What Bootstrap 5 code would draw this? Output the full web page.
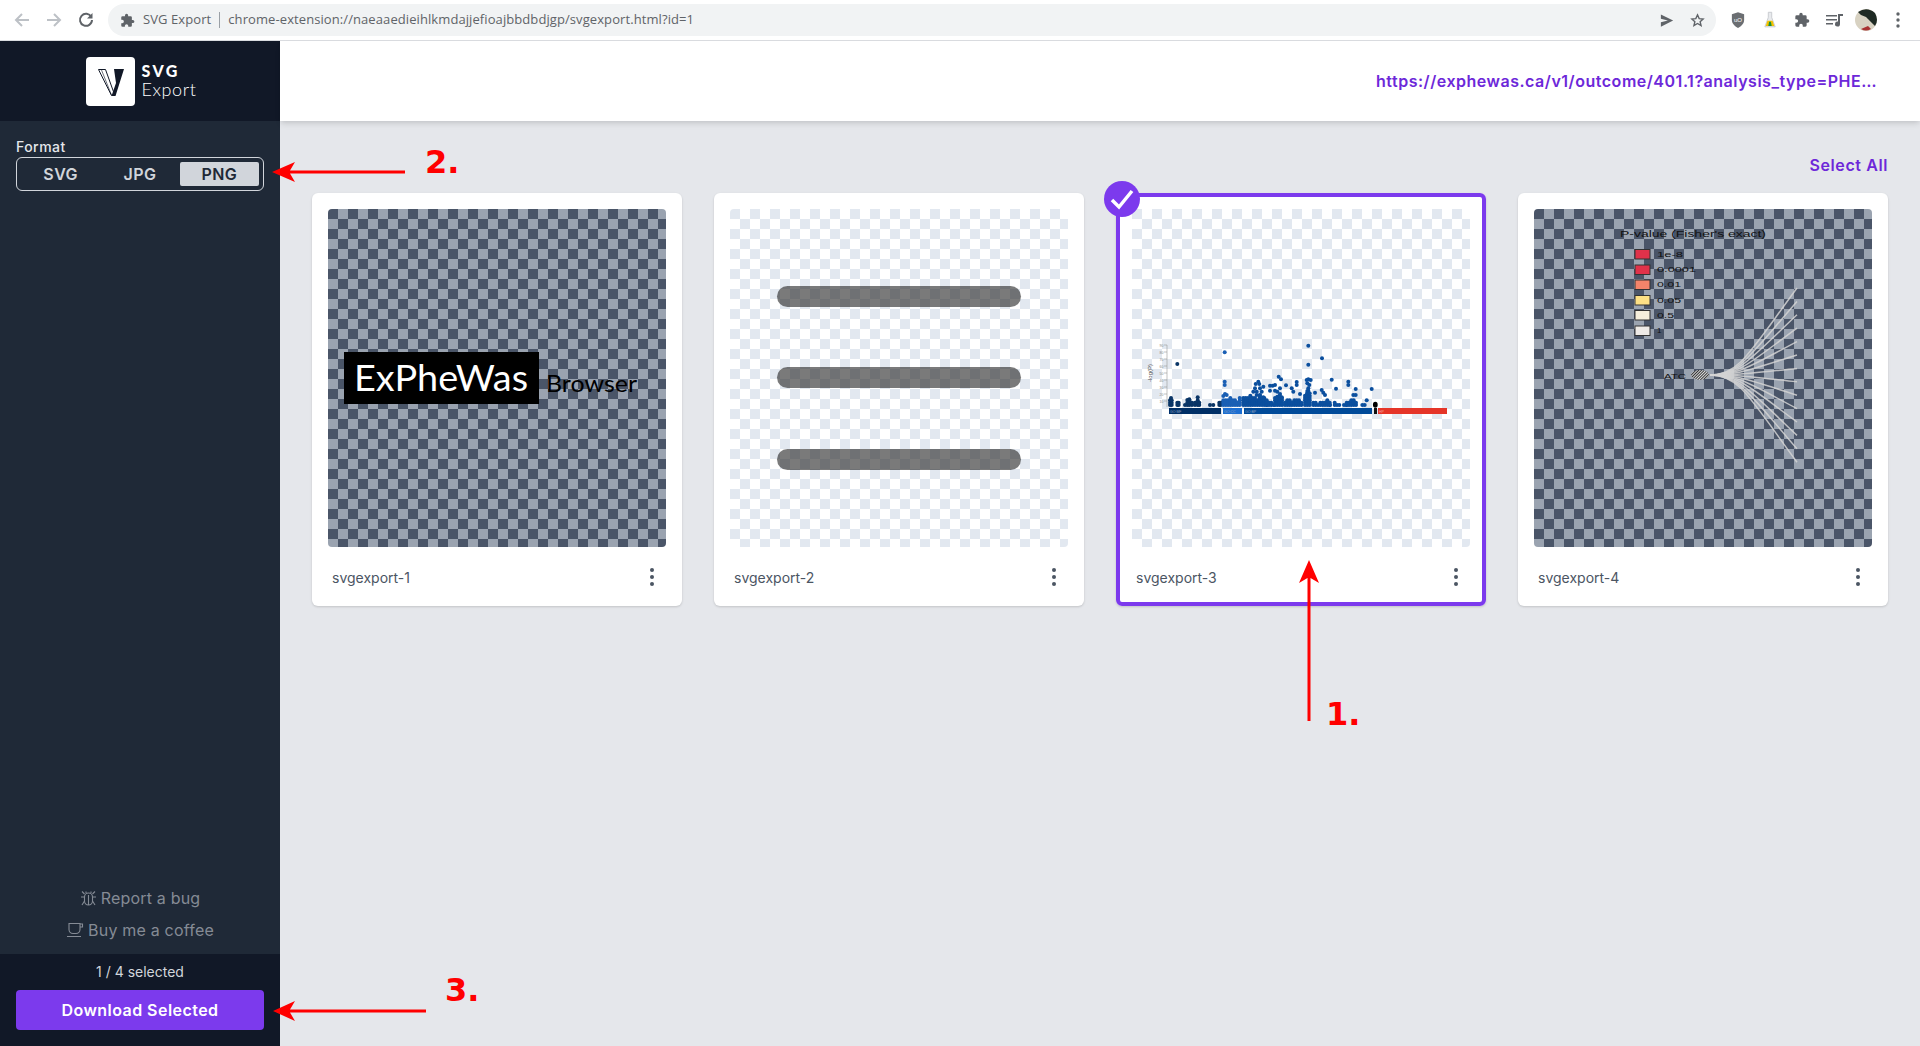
<!DOCTYPE html>
<html lang="en">
<head>
    <meta charset="UTF-8">
    <title>SVG Export</title>
    <link href="https://cdn.jsdelivr.net/npm/bootstrap@5.3.3/dist/css/bootstrap.min.css" rel="stylesheet">
    <style>
        html, body { height: 100%; overflow: hidden; }
        body { font-family: Inter, "Liberation Sans", sans-serif; background: #e5e7eb; }

        /* browser toolbar */
        .chrome-bar { height: 41px; background: #fff; border-bottom: 1px solid #dadce0; padding-left: 6px; }
        .chrome-btn { width: 32px; flex: none; }
        .omnibox { height: 32px; width: 1608px; margin: 0 6px; border-radius: 16px; background: #f1f3f4; padding: 0 11px 0 12px; font-family: "Open Sans", sans-serif; font-size: 13px; letter-spacing: .085px; color: #5f6368; }
        .omni-sep { width: 1px; height: 16px; background: #9aa0a6; margin: 0 8px; }

        /* sidebar */
        .page-body { min-height: 0; }
        .side-panel { width: 280px; flex: none; background: #1f2937; }
        .side-head { height: 80px; background: #111827; padding-left: 2px; }
        .logo-box { width: 49px; height: 49px; background: #fff; border-radius: 4px; }
        .logo-text { color: #fff; font-family: Lato, sans-serif; margin-left: 7px; }
        .logo-text b { display: block; font-weight: 900; font-size: 16px; line-height: 16px; letter-spacing: 2.4px; }
        .logo-text span { display: block; font-weight: 300; font-size: 18px; line-height: 20px; letter-spacing: .6px; }
        .format-wrap { padding: 17px 16px 0; }
        .format-label { color: #e5e7eb; font-size: 14px; font-weight: 500; line-height: 18px; margin-bottom: 1px; letter-spacing: .45px; }
        .format-group { height: 34px; border: 1px solid #d1d5db; border-radius: 6px; padding: 4px; }
        .format-group .btn { flex: 1 1 0; border: 0; border-radius: 2px; padding: 0; font-size: 16px; font-weight: 600; line-height: 24px; letter-spacing: .4px; color: #d1d5db; }
        .format-group .btn.picked { background: #d1d5db; color: #1f2937; }
        .side-links { padding-bottom: 8px; font-size: 16px; letter-spacing: .2px; }
        .side-link { height: 32px; color: #858b95; text-decoration: none; }
        .side-foot { height: 92px; background: #111827; padding: 8px 16px 0; }
        .sel-count { color: #d1d5db; font-size: 14px; line-height: 20px; margin-bottom: 8px; }
        .dl-btn { height: 40px; background: #7c3aed; border: 0; border-radius: 4px; color: #fff; font-weight: 600; font-size: 16px; letter-spacing: .45px; padding: 0; }

        /* main */
        .top-strip { height: 80px; background: #fff; box-shadow: 0 4px 6px -1px rgba(0,0,0,.1), 0 2px 4px -1px rgba(0,0,0,.06); padding-right: 43px; }
        .source-url { color: #6d28d9; font-weight: 600; font-size: 16px; letter-spacing: .52px; white-space: nowrap; }
        .select-all { color: #6d28d9; font-weight: 600; font-size: 16px; letter-spacing: .6px; text-decoration: none; line-height: 24px; }
        .tool-row { padding: 32px 32px 0; height: 72px; }
        .thumb-grid { display: grid; grid-template-columns: repeat(4, 370px); gap: 32px; padding: 0 32px; }
        .thumb-card { height: 413px; border: 0; border-radius: 6px; padding: 16px 16px 11px; box-shadow: 0 1px 3px rgba(0,0,0,.1), 0 1px 2px rgba(0,0,0,.06); position: relative; }
        .thumb-card.chosen { outline: 4px solid #7c3aed; outline-offset: -4px; }
        .check-dot { position: absolute; left: -12px; top: -12px; width: 36px; height: 36px; border-radius: 50%; background: #7c3aed; }
        .thumb-img { width: 338px; height: 338px; flex: none; border-radius: 4px; display: block; }
        .tile-dark { background: repeating-conic-gradient(#9aa3b0 0 25%, #4a5568 0 50%) 0 0 / 20px 20px; }
        .tile-light { background: repeating-conic-gradient(#fff 0 25%, #e2e8f0 0 50%) 0 0 / 20px 20px; }
        .thumb-foot { height: 36px; margin-top: 12px; padding: 0 4px; font-size: 14px; color: #4b5563; }
        .dot-menu { width: 4px; }
        .dot-menu i { display: block; width: 4px; height: 4px; border-radius: 50%; background: #4b5563; margin: 3px 0; }

        /* annotations over the page */
        .note-layer { position: absolute; left: 0; top: 0; width: 1920px; height: 1046px; pointer-events: none; }
        .note-num { font-family: "DejaVu Sans", sans-serif; font-weight: 700; font-size: 32px; fill: #f00; }
    </style>
</head>
<body class="d-flex flex-column">

    <!-- browser toolbar -->
    <div class="chrome-bar d-flex align-items-center flex-shrink-0">
        <div class="chrome-btn d-flex justify-content-center">
            <svg width="16" height="16" viewBox="0 0 16 16" fill="none" stroke="#bdc1c6" stroke-width="2"><path d="M15 8H2M8 2 2 8l6 6"/></svg>
        </div>
        <div class="chrome-btn d-flex justify-content-center">
            <svg width="16" height="16" viewBox="0 0 16 16" fill="none" stroke="#bdc1c6" stroke-width="2"><path d="M1 8h13M8 2l6 6-6 6"/></svg>
        </div>
        <div class="chrome-btn d-flex justify-content-center">
            <svg width="16" height="16" viewBox="0 0 16 16" fill="none" stroke="#5f6368" stroke-width="2"><path d="M13.3 5A6 6 0 1 0 14 8"/><path d="M14.500 1v5.500H9z" fill="#5f6368" stroke="none"/></svg>
        </div>
        <div class="omnibox d-flex align-items-center">
            <svg width="15" height="15" viewBox="0 0 24 24" fill="#5f6368" class="me-2"><path d="M20.500 11H19V7a2 2 0 0 0-2-2h-4V3.500a2.500 2.500 0 0 0-5 0V5H4a2 2 0 0 0-2 2v3.800h1.500a2.700 2.700 0 0 1 0 5.400H2V20a2 2 0 0 0 2 2h3.800v-1.500a2.700 2.700 0 0 1 5.400 0V22H17a2 2 0 0 0 2-2v-4h1.500a2.500 2.500 0 0 0 0-5z"/></svg>
            <span>SVG Export</span>
            <span class="omni-sep"></span>
            <span>chrome-extension://naeaaedieihlkmdajjefioajbbdbdjgp/svgexport.html?id=1</span>
            <span class="ms-auto d-flex align-items-center">
                <svg class="me-3" width="14" height="13" viewBox="0 0 16 14" fill="#5f6368"><path d="M1 0l14 7-14 7V9l8-2-8-2z"/></svg>
                <svg width="15" height="15" viewBox="0 0 24 24" fill="none" stroke="#5f6368" stroke-width="2.200"><path d="M12 3l2.700 6 6.300.6-4.800 4.200 1.500 6.200L12 16.700 6.300 20l1.500-6.200L3 9.600 9.300 9z"/></svg>
            </span>
        </div>
        <div class="chrome-btn d-flex justify-content-center">
            <svg width="14" height="16" viewBox="0 0 16 18"><path d="M8 0l7 2.500V9c0 4-3 7-7 9-4-2-7-5-7-9V2.500z" fill="#6b6e72"/><text x="8" y="11" font-size="7" fill="#fff" text-anchor="middle" font-family="Liberation Sans">uO</text></svg>
        </div>
        <div class="chrome-btn d-flex justify-content-center">
            <svg width="12" height="18" viewBox="0 0 14 20"><path d="M5 1h4v6l4 11H1L5 7z" fill="#e8eaed" stroke="#c4c7cb"/><path d="M4 11h6l2 6H2z" fill="#f2c200"/><path d="M6 12h2l1 5H5z" fill="#1a8f3c"/></svg>
        </div>
        <div class="chrome-btn d-flex justify-content-center">
            <svg width="16" height="16" viewBox="0 0 24 24" fill="#5f6368"><path d="M20.500 11H19V7a2 2 0 0 0-2-2h-4V3.500a2.500 2.500 0 0 0-5 0V5H4a2 2 0 0 0-2 2v3.800h1.500a2.700 2.700 0 0 1 0 5.400H2V20a2 2 0 0 0 2 2h3.800v-1.500a2.700 2.700 0 0 1 5.400 0V22H17a2 2 0 0 0 2-2v-4h1.500a2.500 2.500 0 0 0 0-5z"/></svg>
        </div>
        <div class="chrome-btn d-flex justify-content-center">
            <svg width="17" height="14" viewBox="0 0 17 14" fill="#5f6368"><path d="M0 2h11v1.500H0zM0 6h11v1.500H0zM0 10h7v1.500H0zM12 1h5v2h-3v8a2.500 2.500 0 1 1-2-2.400z"/></svg>
        </div>
        <div class="chrome-btn d-flex justify-content-center">
            <svg width="22" height="22" viewBox="0 0 22 22"><circle cx="11" cy="11" r="11" fill="#d8d2c2"/><path d="M3 3Q12-3 20 4 24 11 20 17L11 8 6 6z" fill="#1f2a24"/><path d="M6 20q5 3 10 0l-3-3z" fill="#a83232"/></svg>
        </div>
        <div class="chrome-btn d-flex justify-content-center">
            <svg width="4" height="16" viewBox="0 0 4 16" fill="#5f6368"><circle cx="2" cy="2" r="1.700"/><circle cx="2" cy="8" r="1.700"/><circle cx="2" cy="14" r="1.700"/></svg>
        </div>
    </div>

    <div class="page-body d-flex flex-grow-1">
        <!-- sidebar -->
        <aside class="side-panel d-flex flex-column">
            <div class="side-head d-flex align-items-center justify-content-center">
                <div class="logo-box">
                    <svg width="49" height="49" viewBox="0 0 49 49"><path d="M12.500 12.500h7l9 25-3 1z" fill="none" stroke="#111827" stroke-width="1"/><path d="M15.500 13l10 25" stroke="#111827" stroke-width=".6"/><path d="M28 12h10L29.500 39H25.500l4.500-13z" fill="#111827"/></svg>
                </div>
                <div class="logo-text"><b>SVG</b><span>Export</span></div>
            </div>
            <div class="format-wrap">
                <div class="format-label">Format</div>
                <div class="format-group d-flex" role="group">
                    <button type="button" class="btn">SVG</button>
                    <button type="button" class="btn">JPG</button>
                    <button type="button" class="btn picked">PNG</button>
                </div>
            </div>
            <div class="side-links mt-auto text-center">
                <a class="side-link d-flex align-items-center justify-content-center" href="#">
                    <svg class="me-1" width="17" height="18" viewBox="0 0 17 18" fill="none" stroke="#858b95" stroke-width="1.100"><rect x="4.500" y="4" width="8" height="12" rx="4"/><path d="M8.500 6v10M6 4V2.500M11 4V2.500M4.500 8H1M12.500 8H16M4.500 5 2 2.500M12.500 5 15 2.500M4.500 12 2 16M12.500 12l2.500 4"/></svg>
                    Report a bug
                </a>
                <a class="side-link d-flex align-items-center justify-content-center" href="#">
                    <svg class="me-1" width="18" height="16" viewBox="0 0 18 16" fill="none" stroke="#858b95" stroke-width="1.100"><path d="M3 1.500h11v6a4 4 0 0 1-4 4H7a4 4 0 0 1-4-4zM14 2h2.500v3H14M1 14.500h14"/></svg>
                    Buy me a coffee
                </a>
            </div>
            <div class="side-foot text-center">
                <div class="sel-count">1 / 4 selected</div>
                <button type="button" class="btn dl-btn w-100">Download Selected</button>
            </div>
        </aside>

        <!-- main area -->
        <main class="flex-grow-1 d-flex flex-column">
            <div class="top-strip d-flex align-items-center justify-content-end">
                <div class="source-url">https://exphewas.ca/v1/outcome/401.1?analysis_type=PHE…</div>
            </div>
            <div class="tool-row d-flex justify-content-end">
                <a class="select-all" href="#">Select All</a>
            </div>
            <div class="thumb-grid">
                <div class="card thumb-card">
                    <svg class="thumb-img tile-dark" viewBox="0 0 338 338">
                        <rect x="16" y="143" width="195" height="52" fill="#000"/>
                        <text x="26" y="182" fill="#fff" font-family="Lato" font-size="37" textLength="174" lengthAdjust="spacingAndGlyphs">ExPheWas</text>
                        <text x="218" y="183" fill="#000" font-family="Lato" font-size="24" textLength="91" lengthAdjust="spacingAndGlyphs">Browser</text>
                    </svg>
                    <div class="thumb-foot d-flex align-items-center justify-content-between">
                        <span>svgexport-1</span>
                        <span class="dot-menu me-2"><i></i><i></i><i></i></span>
                    </div>
                </div>
                <div class="card thumb-card">
                    <svg class="thumb-img tile-light" viewBox="0 0 338 338">
                        <g fill="#282828" fill-opacity=".62">
                            <rect x="47" y="77" width="244" height="21" rx="10.500"/>
                            <rect x="47" y="158" width="244" height="21" rx="10.500"/>
                            <rect x="47" y="240" width="244" height="21" rx="10.500"/>
                        </g>
                    </svg>
                    <div class="thumb-foot d-flex align-items-center justify-content-between">
                        <span>svgexport-2</span>
                        <span class="dot-menu me-2"><i></i><i></i><i></i></span>
                    </div>
                </div>
                <div class="card thumb-card chosen">
                    <span class="check-dot d-flex align-items-center justify-content-center">
                        <svg width="26" height="22" viewBox="0 0 26 22" fill="none" stroke="#fff" stroke-width="3.500"><path d="M3 12l7 7L23 3"/></svg>
                    </span>
                    <svg class="thumb-img tile-light" viewBox="0 0 338 338">
                        <path d="M35 136v62M35 136h-3M35 143h-3M35 150h-3M35 157h-3M35 164h-3M35 171h-3M35 178h-3M35 185h-3M35 192h-3" stroke="#999" stroke-width=".6" fill="none"/>
                        <g font-family="Liberation Sans" font-size="3.500" fill="#888" text-anchor="end">
                            <text x="31.500" y="138">90</text><text x="31.500" y="145">80</text><text x="31.500" y="152">70</text>
                            <text x="31.500" y="159">60</text><text x="31.500" y="166">50</text><text x="31.500" y="173">40</text>
                            <text x="31.500" y="180">30</text><text x="31.500" y="187">20</text><text x="31.500" y="194">10</text>
                        </g>
                        <text x="20" y="164" font-size="6" fill="#555" font-family="Liberation Sans" text-anchor="middle" transform="rotate(-90 20 164)">-log(P)</text>
                        <rect x="37" y="199" width="52" height="6" fill="#002f66"/>
                        <rect x="91" y="199" width="19" height="6" fill="#1c6ed1"/>
                        <rect x="112" y="199" width="128" height="6" fill="#004a99"/>
                        <rect x="242" y="199" width="3" height="6" fill="#111"/>
                        <rect x="246" y="199" width="69" height="6" fill="#e53528"/>
                        <g font-family="Liberation Sans" font-size="3.500" fill="#8aa0c0">
                            <text x="38" y="203.500">GO:MF</text><text x="92" y="203.500">GO:CC</text><text x="113" y="203.500">GO:BP</text>
                            <text x="247" y="203.500" fill="#f5a99f">HP</text>
                        </g>
                        <g id="plotDots"></g>
                    </svg>
                    <div class="thumb-foot d-flex align-items-center justify-content-between">
                        <span>svgexport-3</span>
                        <span class="dot-menu me-2"><i></i><i></i><i></i></span>
                    </div>
                </div>
                <div class="card thumb-card">
                    <svg class="thumb-img tile-dark" viewBox="0 0 338 338">
                        <defs>
                            <pattern id="hatch" width="2" height="2" patternUnits="userSpaceOnUse" patternTransform="rotate(45)">
                                <rect width="2" height="2" fill="#ddd"/><rect width="1" height="2" fill="#333"/>
                            </pattern>
                        </defs>
                        <g font-family="Liberation Sans" fill="#111" font-size="8">
                            <text x="86" y="28" font-size="9" textLength="146" lengthAdjust="spacingAndGlyphs">P-value (Fisher's exact)</text>
                            <text x="123" y="48" textLength="26" lengthAdjust="spacingAndGlyphs">1e-8</text>
                            <text x="123" y="63" textLength="39" lengthAdjust="spacingAndGlyphs">0.0001</text>
                            <text x="123" y="78" textLength="24" lengthAdjust="spacingAndGlyphs">0.01</text>
                            <text x="123" y="94" textLength="24" lengthAdjust="spacingAndGlyphs">0.05</text>
                            <text x="123" y="109" textLength="17" lengthAdjust="spacingAndGlyphs">0.5</text>
                            <text x="123" y="124">1</text>
                            <text x="130" y="170" textLength="22" lengthAdjust="spacingAndGlyphs">ATC</text>
                        </g>
                        <g stroke="#333" stroke-width="1">
                            <rect x="101" y="40.500" width="15" height="9.500" fill="#e0324a"/>
                            <rect x="101" y="56" width="15" height="9.500" fill="#e0324a"/>
                            <rect x="101" y="71" width="15" height="9.500" fill="#f4846a"/>
                            <rect x="101" y="86.500" width="15" height="9.500" fill="#fde085"/>
                            <rect x="101" y="101.500" width="15" height="9.500" fill="#f6efdc"/>
                            <rect x="101" y="117" width="15" height="9.500" fill="#eeeae6"/>
                        </g>
                        <ellipse cx="166" cy="166" rx="9" ry="5" fill="url(#hatch)"/>
                        <g id="fanLines" fill="none" stroke="#d4d4d4" stroke-width="1.500" stroke-opacity=".85"></g>
                    </svg>
                    <div class="thumb-foot d-flex align-items-center justify-content-between">
                        <span>svgexport-4</span>
                        <span class="dot-menu me-2"><i></i><i></i><i></i></span>
                    </div>
                </div>
            </div>
        </main>
    </div>

    <!-- red annotations -->
    <svg class="note-layer" viewBox="0 0 1920 1046">
        <g fill="#f00" stroke="none">
            <path d="M272 172l23-10-5 8.500h115v3H290l5 8.500z"/>
            <path d="M273 1011l22-10-5 8.500h136v3H290l5 8.500z"/>
            <path d="M1309 560l10 23-8.500-5v143h-3V578l-8.500 5z"/>
        </g>
        <text class="note-num" x="425" y="173">2.</text>
        <text class="note-num" x="445" y="1001">3.</text>
        <text class="note-num" x="1326" y="725">1.</text>
    </svg>

    <script src="https://cdn.jsdelivr.net/npm/bootstrap@5.3.3/dist/js/bootstrap.bundle.min.js"></script>
    <script>
        // manhattan plot: points are in the plot's own 3x coordinates, hence the /3 - 32 and /3 + 111 below
        const points = [[625,77],[374,97],[232,132],[666,115],[625,134],[695,179],[708,206],[815,207],[745,185],[745,195],[767,207],[374,185],[374,195],[536,170],[543,178],[467,192],[475,185],[478,192],[465,205],[510,197],[518,197],[525,195],[558,196],[590,186],[590,195],[575,205],[580,215],[600,222],[645,218],[665,210],[670,218],[675,225],[800,241],[760,225],[767,225],[625,178],[632,180],[620,180],[622,190],[628,195],[625,205],[625,212],[622,220],[628,228],[213,234],[293,232],[268,238],[262,240],[375,222],[380,225],[370,228],[480,205],[490,200],[485,215],[470,215],[460,215],[470,225],[480,225],[490,232],[540,205],[532,215],[540,222],[532,230],[545,232],[510,212],[525,212]];
        const stacks = [[210,240],[215,240],[232,245],[236,248],[255,250],[262,242],[268,240],[276,245],[285,248],[293,240],[298,248],[330,252],[340,250],[358,245],[362,245]];
        // [from, to, highest point] of the dense part
        const bands = [[370,425,232],[430,500,226],[500,522,242],[525,550,226],[555,610,235],[615,635,212],[640,690,240],[690,740,248],[740,770,236],[780,800,250]];
        bands.forEach(b => {
            for (let x = b[0]; x <= b[1]; x += 7) {
                stacks.push([x, b[2] + ((x * 13) % 11)]);
            }
        });
        stacks.forEach(s => {
            for (let y = 255; y >= s[1]; y -= 7) points.push([s[0], y]);
        });
        let dotMarkup = '';
        points.forEach(p => {
            const col = p[0] < 365 ? '#0a3566' : p[0] < 428 ? '#1a5fb4' : '#0b4f9e';
            dotMarkup += `<circle cx="${(p[0] / 3 - 32).toFixed(1)}" cy="${(p[1] / 3 + 111).toFixed(1)}" r="2" fill="${col}"/>`;
        });
        dotMarkup += '<ellipse cx="243.300" cy="195.700" rx="2.400" ry="3" fill="#000"/>';
        document.getElementById('plotDots').innerHTML = dotMarkup;

        // ATC fan lines
        let fan = '';
        for (let i = 0; i < 14; i++) {
            const y = 79 + i * 13.400;
            fan += `<path d="M176 166C205 166 215 ${166 + (y - 166) * .25} 263 ${y}"/>`;
        }
        document.getElementById('fanLines').innerHTML = fan;
    </script>
</body>
</html>
